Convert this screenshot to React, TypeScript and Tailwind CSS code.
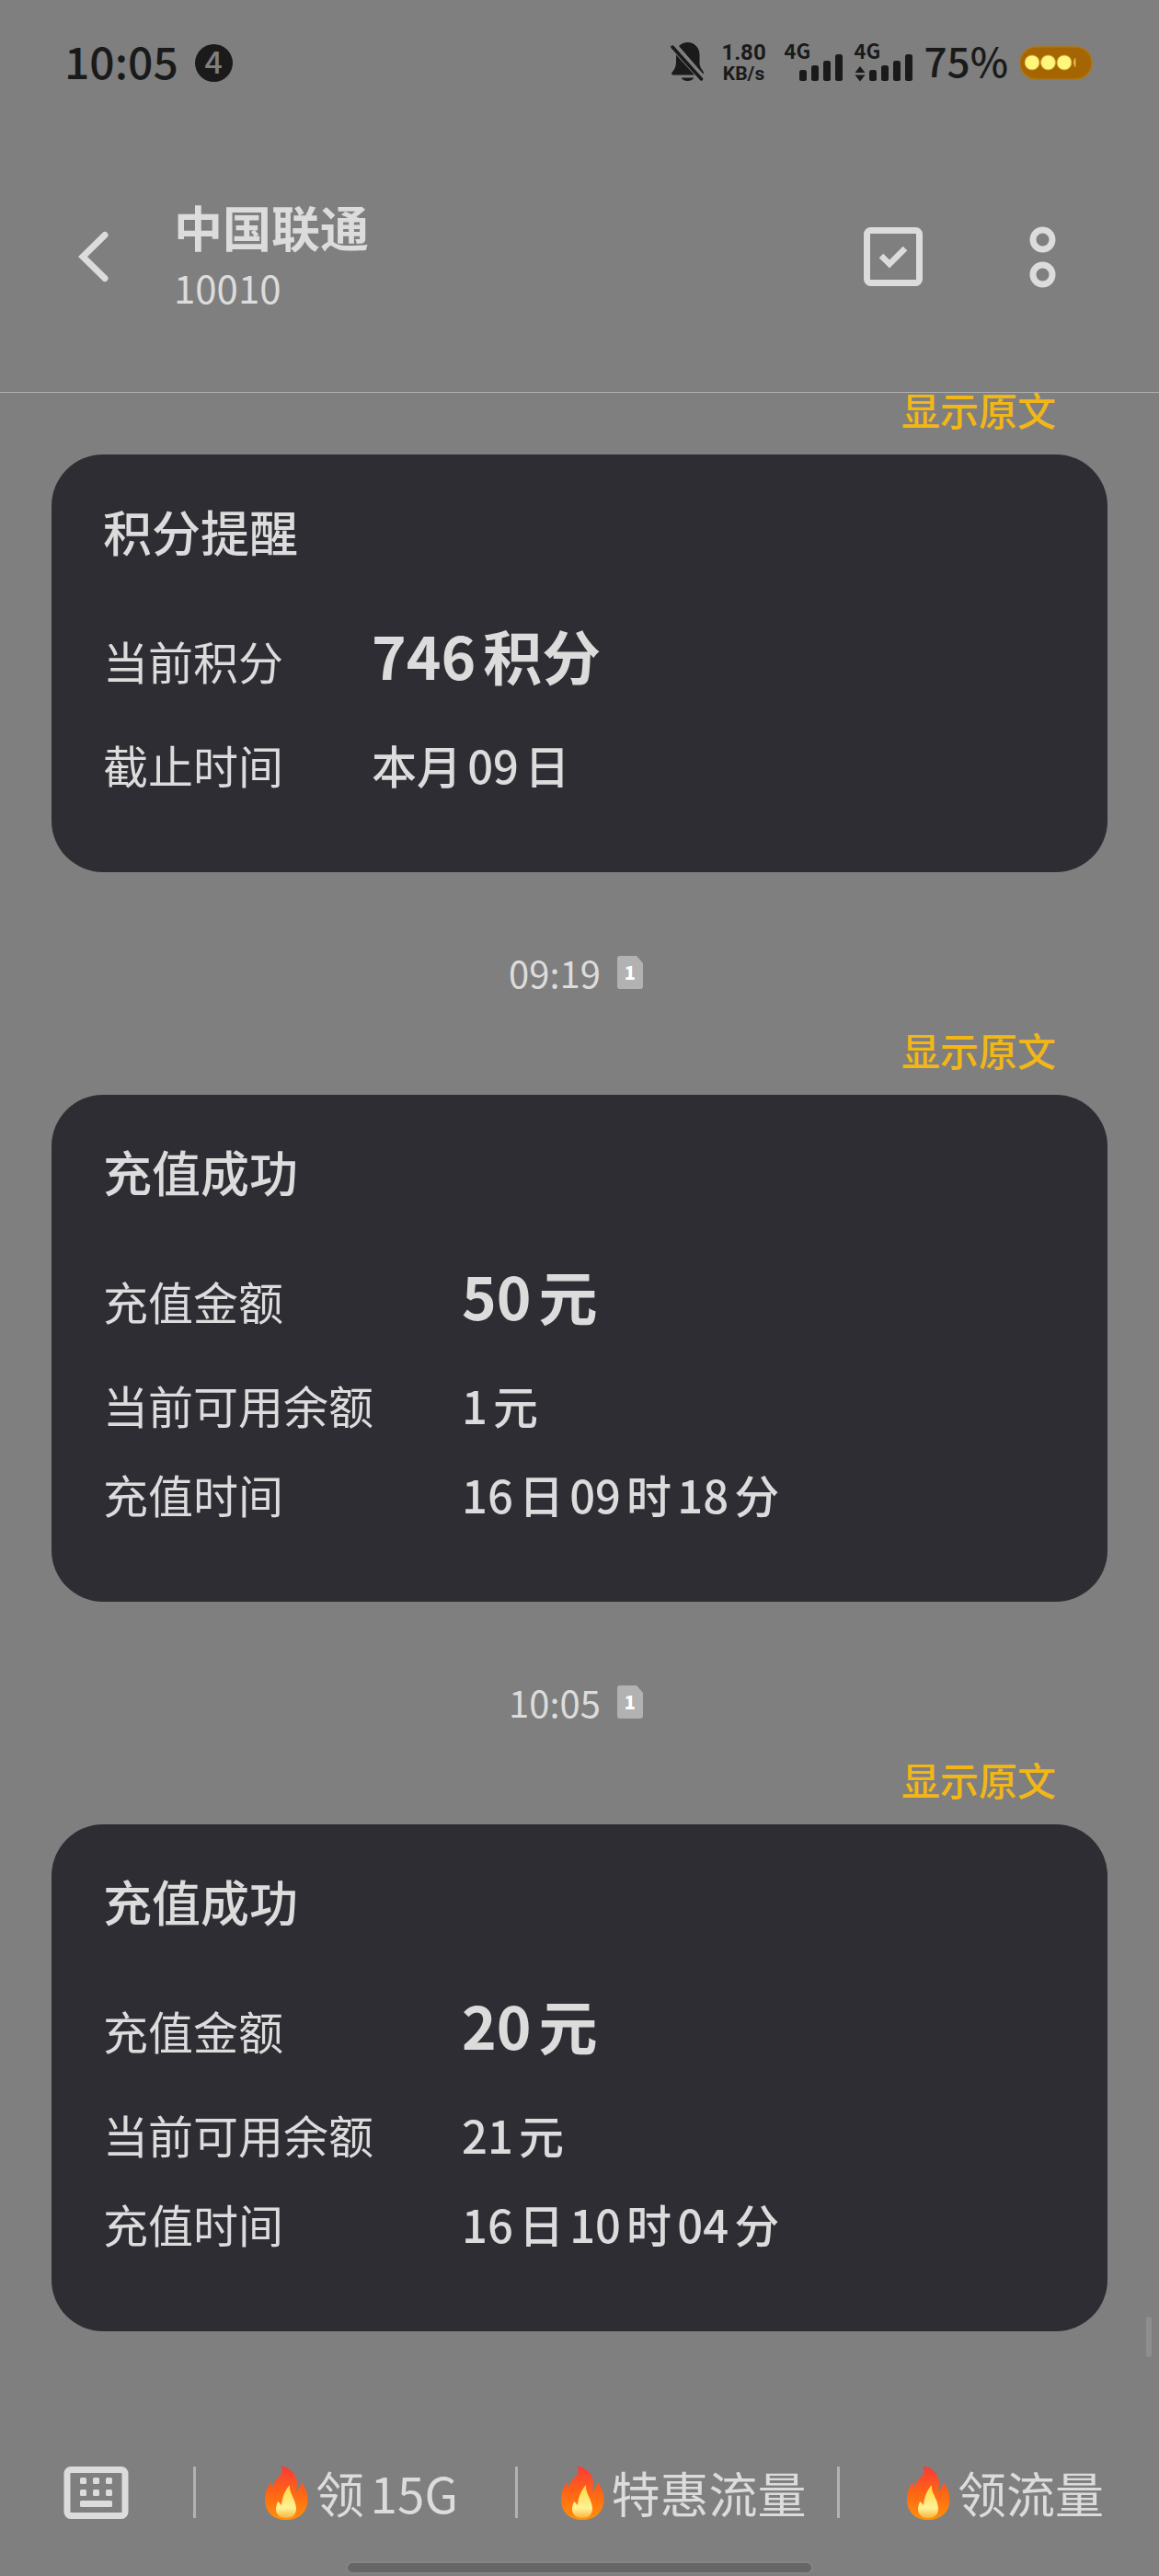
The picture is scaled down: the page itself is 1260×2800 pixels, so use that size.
import type { ReactNode } from 'react';

type Row = { label: string; value: string };
type Notice = { time?: string; title: string; rows: Row[] };

const notices: Notice[] = [
  {
    title: '积分提醒',
    rows: [
      { label: '当前积分', value: '746积分' },
      { label: '截止时间', value: '本月09日' },
    ],
  },
  {
    time: '09:19',
    title: '充值成功',
    rows: [
      { label: '充值金额', value: '50元' },
      { label: '当前可用余额', value: '1元' },
      { label: '充值时间', value: '16日09时18分' },
    ],
  },
  {
    time: '10:05',
    title: '充值成功',
    rows: [
      { label: '充值金额', value: '20元' },
      { label: '当前可用余额', value: '21元' },
      { label: '充值时间', value: '16日10时04分' },
    ],
  },
];

const menus = ['领15G', '特惠流量', '领流量'];

function MutedBell() {
  return (
    <svg width="38" height="44" viewBox="0 0 38 44" fill="currentColor">
      <path d="M9 4c3-2.500 6-4 9.500-4C26 0 31.500 6 31.500 13v9c0 4 1.500 6.500 3.500 9 1 1.500 1.200 2.500.5 3.500L9 4Z" />
      <path d="M6 13.500 26 35.500H3c-2 0-2.500-1.500-1.200-3C4.500 29 6 26 6 21.500v-8Z" />
      <path d="M11.500 38.500h14c-1.500 2.500-4 3.500-7 3.500s-5.500-1-7-3.500Z" />
      <path d="M2 5 33.500 40" stroke="currentColor" strokeWidth="3.500" strokeLinecap="round" />
      <path d="M6.500 4.500 36 37" stroke="#7f7f7f" strokeWidth="1.500" />
    </svg>
  );
}

function Signal({ active }: { active?: boolean }) {
  return (
    <div className="relative h-11 w-16">
      <span className="absolute top-0 left-0 text-[22px] leading-4 font-bold">4G</span>
      <svg width="64" height="44" viewBox="0 0 64 44" fill="currentColor">
        {active && <path d="M6 26 11.500 33H.5ZM.5 35.500h11L6 42.500Z" />}
        <rect x="16" y="30" width="8" height="12" rx="2.500" />
        <rect x="29" y="25" width="8" height="17" rx="2.500" />
        <rect x="42" y="20" width="8" height="22" rx="2.500" />
        <rect x="55" y="13" width="8" height="29" rx="2.500" />
      </svg>
    </div>
  );
}

function Battery() {
  return (
    <svg width="80" height="37" viewBox="0 0 80 37">
      <rect x="1" y="1" width="78" height="35" rx="17.500" fill="#a66503" stroke="#b0760f" strokeWidth="1.500" />
      <g fill="#fff77c" stroke="#d9a335" strokeWidth="1">
        <circle cx="14" cy="18" r="8" />
        <circle cx="31.500" cy="18" r="8" />
        <circle cx="49" cy="18" r="8" />
        <path d="M61 13v10c-2-3-2-7 0-10Z" />
      </g>
    </svg>
  );
}

function StatusBar() {
  return (
    <div className="flex h-[136px] items-center pr-[72px] pl-[70px] text-[#1a1a1a]">
      <span className="pb-[6px] text-[48px] leading-[52px] font-medium">10:05</span>
      <span className="ml-[18px] flex size-[41px] items-center justify-center rounded-full bg-[#1a1a1a] pb-1 text-[34px] leading-8 font-medium text-[#7f7f7f]">
        4
      </span>
      <div className="ml-auto flex items-center">
        <MutedBell />
        <div className="ml-4 flex w-[52px] flex-col items-center font-['Roboto',sans-serif] font-bold">
          <span className="text-[24px] leading-6">1.80</span>
          <span className="text-[21px] leading-[22px]">KB/s</span>
        </div>
        <div className="ml-[18px] flex gap-3">
          <Signal />
          <Signal active />
        </div>
        <span className="ml-3 pb-[6px] text-[44px] leading-[52px] font-medium">75%</span>
        <span className="ml-3">
          <Battery />
        </span>
      </div>
    </div>
  );
}

function IconButton({ label, children }: { label: string; children: ReactNode }) {
  return (
    <button type="button" aria-label={label} className="block">
      {children}
    </button>
  );
}

function ChatHeader() {
  return (
    <div className="flex items-center pt-[74px] pr-[112px] pb-[78px] pl-[85px]">
      <IconButton label="返回">
        <svg width="34" height="56" viewBox="0 0 34 56" fill="none" stroke="currentColor" strokeWidth="7" strokeLinecap="round">
          <path d="M29 4.500 5 28l24 23.500" />
        </svg>
      </IconButton>
      <div className="ml-[70px] pb-[6px]">
        <h1 className="text-[53px] leading-[72px] font-bold">中国联通</h1>
        <p className="text-[42px] leading-[60px] font-normal">10010</p>
      </div>
      <div className="ml-auto flex items-center gap-[116px]">
        <IconButton label="选择">
          <svg width="64" height="64" viewBox="0 0 64 64" fill="none" stroke="currentColor">
            <rect x="3.500" y="3.500" width="57" height="57" rx="4" strokeWidth="7" />
            <path d="m19 31 9 9 17-17" strokeWidth="6.500" />
          </svg>
        </IconButton>
        <IconButton label="更多">
          <svg width="29" height="67" viewBox="0 0 29 67" fill="none" stroke="currentColor" strokeWidth="7">
            <circle cx="14.500" cy="14.500" r="10.500" />
            <circle cx="14.500" cy="52.500" r="10.500" />
          </svg>
        </IconButton>
      </div>
    </div>
  );
}

function TimeStamp({ time }: { time: string }) {
  return (
    <div className="flex items-center justify-center gap-[18px] pt-[81px] pr-2 pb-[38px]">
      <time className="text-[40px] leading-[56px] font-normal">{time}</time>
      {/* SIM slot badge */}
      <span className="relative flex h-9 w-7 items-center justify-center text-[20px] leading-5 font-black text-white">
        <svg width="28" height="36" viewBox="0 0 28 36" className="absolute inset-0">
          <path d="M3 0h18l7 8v25a3 3 0 0 1-3 3H3a3 3 0 0 1-3-3V3a3 3 0 0 1 3-3Z" fill="#b2b2b2" />
        </svg>
        <span className="relative">1</span>
      </span>
    </div>
  );
}

function NoticeCard({ title, rows }: Notice) {
  return (
    <article className="mx-14 rounded-[56px] bg-[#2e2d33] px-14 pt-12 pb-[69px]">
      <h2 className="text-[53px] leading-[70px] font-medium">{title}</h2>
      <dl className="mt-[51px] grid grid-cols-[auto_1fr] items-baseline gap-x-24 text-[49px] leading-[97px] [text-autospace:normal]">
        {rows.map((row, i) => (
          <div key={row.label} className="contents">
            <dt>{row.label}</dt>
            <dd className={i === 0 ? 'mb-[22px] text-[64px] font-bold' : 'font-medium'}>{row.value}</dd>
          </div>
        ))}
      </dl>
    </article>
  );
}

function Fire() {
  return (
    <svg width="64" height="74" viewBox="0 0 64 74">
      <defs>
        <linearGradient id="flame" x1="0" y1="0" x2="0" y2="1">
          <stop offset="0" stopColor="#f93a38" />
          <stop offset=".5" stopColor="#ff6614" />
          <stop offset="1" stopColor="#ff900c" />
        </linearGradient>
        <linearGradient id="core" x1="0" y1="0" x2="0" y2="1">
          <stop offset="0" stopColor="#ffd83e" />
          <stop offset=".7" stopColor="#fff296" />
          <stop offset="1" stopColor="#f9b43a" />
        </linearGradient>
      </defs>
      <g transform="translate(2 0)">
        <path
          d="M24 9c8-1 17 7 18 17 0 4-.5 7-1.500 10 3-2 5.500-6 6.500-10 4 6 6.500 12 6.500 19 0 14-10 22-23.500 22S7 59 7 45c0-7 2-13 6-19 1 2 1.500 4 1.500 7 1-5 4-9 8-13 4-4 4-8 1.500-11Z"
          fill="url(#flame)"
        />
        <path d="M34 29c-1 9 7 16 7 26 0 6-4 10-11 10s-11-4-11-10c0-3 1-5 2-8 1.500 1 2.500 2 4 4 1-9 3-15 9-22Z" fill="url(#core)" />
      </g>
    </svg>
  );
}

function MenuBar() {
  return (
    <nav className="flex items-center text-[53px] leading-[74px]">
      <div className="flex w-[210px] shrink-0 pl-[69px]">
        <IconButton label="键盘">
          <svg width="71" height="57" viewBox="0 0 71 57" fill="currentColor">
            <rect x="4" y="3.500" width="63" height="50" rx="4" fill="none" stroke="currentColor" strokeWidth="7" />
            {[18, 32, 46].map((x) => (
              <g key={x}>
                <rect x={x} y="12" width="7" height="7" rx="1.500" />
                <rect x={x} y="25" width="7" height="7" rx="1.500" />
              </g>
            ))}
            <rect x="18" y="37" width="35" height="7" rx="1.500" />
          </svg>
        </IconButton>
      </div>
      {menus.map((menu) => (
        <div key={menu} className="flex flex-1 items-center">
          <span className="h-14 w-[3px] bg-[#b2b2b2]" />
          <button type="button" className="flex flex-1 items-center justify-center pl-1 whitespace-nowrap [text-autospace:normal]">
            <Fire />
            {menu}
          </button>
        </div>
      ))}
    </nav>
  );
}

export default function App() {
  return (
    <div className="relative flex min-h-screen flex-col bg-[#7f7f7f] font-['Noto_Sans_CJK_SC',sans-serif] text-[#dcdcdc]">
      <header className="border-b border-[#b0b0b0]">
        <StatusBar />
        <ChatHeader />
      </header>

      <main>
        {notices.map((notice, i) => (
          <section key={i}>
            {notice.time && <TimeStamp time={notice.time} />}
            <div className="flex justify-end pr-[112px] pb-[31px]">
              <button type="button" className="text-[42px] leading-[36px] font-medium text-[#f2b716]">
                显示原文
              </button>
            </div>
            <NoticeCard {...notice} />
          </section>
        ))}
      </main>

      <footer className="mt-auto pb-1">
        <MenuBar />
        {/* gesture handle */}
        <div className="mx-auto mt-10 h-[10px] w-2/5 rounded-full bg-[#666] ring-2 ring-[#858585]" />
      </footer>

      {/* scroll position thumb */}
      <div className="absolute right-2 bottom-[238px] h-11 w-[6px] rounded-sm bg-[#8e8e8e]" />
    </div>
  );
}
